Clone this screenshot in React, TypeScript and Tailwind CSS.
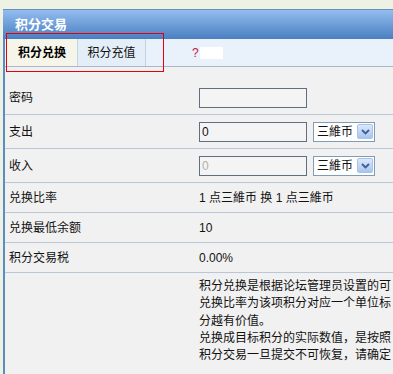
import React from 'react';

const font = { fontFamily: '"Liberation Sans", "Noto Sans CJK SC", sans-serif' };

const Chevron = () => (
  <div className="flex h-[15px] w-[16px] items-center justify-center rounded-[2px] border border-[#a9c2e6] bg-gradient-to-b from-[#dbe8fb] to-[#a9c4ec]">
    <svg width="9" height="6" viewBox="0 0 9 6">
      <path d="M1 1 L4.5 4.5 L8 1" fill="none" stroke="#3a5f98" strokeWidth="1.8" />
    </svg>
  </div>
);

const CoinSelect = () => (
  <div className="ml-[6px] flex h-[20px] w-[62px] items-center justify-between border border-[#7f9db9] bg-white pl-[3px] pr-[1px]">
    <span className="text-[12px] leading-none text-[#111]">三維币</span>
    <Chevron />
  </div>
);

const Field = ({ value, disabled }: { value?: string; disabled?: boolean }) => (
  <div className="flex h-[20px] w-[108px] items-center border border-[#5f6f80] bg-[#f4f4f4] px-[2px]">
    <span className={`text-[12px] leading-none ${disabled ? 'text-[#b0b0b0]' : 'text-[#111]'}`}>{value}</span>
  </div>
);

const Row = ({ label, children, tall }: { label: string; children: React.ReactNode; tall?: boolean }) => (
  <div className={`flex items-center border-b border-[#b9c6d8] ${tall ? 'h-[34px]' : 'h-[30px]'}`}>
    <div className="w-[194px] shrink-0 pl-[4px] text-[12px] text-[#111]">{label}</div>
    <div className="flex items-center text-[12px] text-[#111]">{children}</div>
  </div>
);

export default function App() {
  return (
    <div className="relative h-[374px] w-[393px] overflow-hidden bg-[#eef2e4] pl-[3px] pt-[9px]" style={font}>
      <div className="w-[420px]">
        <div className="flex h-[30px] items-center border-t border-[#6b8fb6] bg-gradient-to-b from-[#93bdf0] to-[#4a7fc0] pl-[12px]">
          <span className="text-[13px] font-bold text-white">积分交易</span>
        </div>
        <div className="border-l-2 border-[#5b8cc2] bg-[#f1f1f1]">
          <div className="flex h-[28px] items-stretch border-b border-[#a9b7c6] bg-[#e9f1fa] pl-[2px]">
            <div className="flex w-[70px] items-center justify-center bg-[#f5f5ea] text-[12px] font-bold text-[#000]">积分兑换</div>
            <div className="flex w-[69px] items-center justify-center border-x border-[#c4d3e4] bg-[#e4eef9] text-[12px] text-[#111]">积分充值</div>
            <div className="ml-[46px] flex items-center">
              <span className="text-[12px] text-[#c02040]">?</span>
              <span className="ml-[1px] h-[12px] w-[23px] bg-white" />
            </div>
          </div>
          <div className="h-[14px]" />
          <Row label="密码" tall>
            <Field />
          </Row>
          <Row label="支出" tall>
            <Field value="0" />
            <CoinSelect />
          </Row>
          <Row label="收入" tall>
            <Field value="0" disabled />
            <CoinSelect />
          </Row>
          <Row label="兑换比率">1 点三維币 换 1 点三維币</Row>
          <Row label="兑换最低余额">10</Row>
          <Row label="积分交易税">0.00%</Row>
          <div className="flex h-[110px] pt-[5px]">
            <div className="w-[194px] shrink-0" />
            <div className="whitespace-nowrap text-[12px] leading-[17.3px] text-[#111]">
              <div>积分兑换是根据论坛管理员设置的可</div>
              <div>兑换比率为该项积分对应一个单位标</div>
              <div>分越有价值。</div>
              <div>兑换成目标积分的实际数值，是按照</div>
              <div>积分交易一旦提交不可恢复，请确定</div>
            </div>
          </div>
        </div>
      </div>
      <div className="absolute left-[6px] top-[33px] h-[39px] w-[158px] border border-solid border-red-600" />
    </div>
  );
}
